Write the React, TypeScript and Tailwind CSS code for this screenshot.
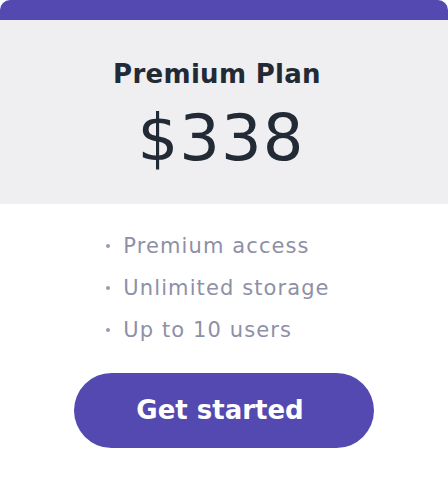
import React from "react";

export default function App() {
  const items = ["Premium access", "Unlimited storage", "Up to 10 users"];
  return (
    <div className="w-[448px] h-[480px] bg-white" style={{ fontFamily: "'DejaVu Sans', sans-serif" }}>
      <div className="w-[448px] h-[480px] rounded-[10px] overflow-hidden bg-white flex flex-col">
        <div className="h-[20px] bg-[#5349b0]" />
        <div className="h-[184px] bg-[#efeff1] flex flex-col items-center pt-[38px]">
          <div className="text-[26px] leading-[32px] font-bold text-[#222a35] tracking-[0.3px] mr-[14px]">Premium Plan</div>
          <div className="text-[64px] leading-[72px] font-normal text-[#222a35] mt-[12px] tracking-[1px] mr-[6px]">$338</div>
        </div>
        <div className="flex flex-col items-center pt-[28px]">
          <ul className="flex flex-col gap-[14px] mr-[12px]">
            {items.map((t) => (
              <li key={t} className="text-[21px] leading-[28px] text-[#8e90a6] flex items-center tracking-[1.1px]">
                <span className="w-[4px] h-[4px] rounded-full bg-[#9a9cb0] mr-[13px]" />
                {t}
              </li>
            ))}
          </ul>
          <button className="mt-[29px] w-[300px] h-[75px] rounded-full bg-[#5349b0] text-white text-[26px] font-bold pr-[8px]">
            Get started
          </button>
        </div>
      </div>
    </div>
  );
}
